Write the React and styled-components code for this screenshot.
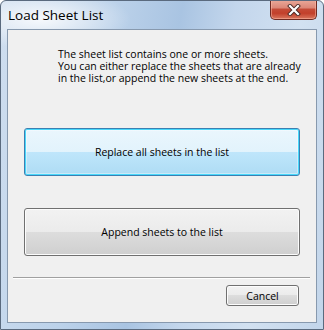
import React from "react";
import styled, { createGlobalStyle } from "styled-components";

const Global = createGlobalStyle`
  html, body { margin: 0; padding: 0; background: #ffffff; }
  body { width: 324px; height: 330px; overflow: hidden; }
  #root { width: 324px; height: 330px; }
`;

const Window = styled.div`
  box-sizing: border-box;
  width: 324px;
  height: 330px;
  display: flex;
  flex-direction: column;
  border: 1px solid #5a6a7e;
  border-radius: 6px 6px 0 0;
  background:
    radial-gradient(ellipse 90px 30px at 40px 18px, rgba(255,255,255,0.85), rgba(255,255,255,0) 100%),
    linear-gradient(100deg, #cfdeef 0%, #bcd2ea 30%, #a9c4e2 48%, #c3d6ec 62%, #d2e1f1 80%, #c2d5ea 100%);
  font-family: "Open Sans", "Noto Sans", sans-serif;
  color: #000;
  overflow: hidden;
`;

const TitleBar = styled.div`
  height: 28px;
  display: flex;
  align-items: flex-start;
  justify-content: space-between;
  flex-shrink: 0;
`;

const Title = styled.div`
  margin: 6px 0 0 7px;
  font-size: 13.5px;
  line-height: 16px;
  color: #000;
`;

const CloseButton = styled.div`
  box-sizing: border-box;
  width: 47px;
  height: 20px;
  margin: -1px 6px 0 0;
  border: 1px solid #6e2a22;
  border-top: none;
  border-radius: 0 0 5px 5px;
  background: linear-gradient(
    180deg,
    #eaa99a 0%,
    #dc8878 40%,
    #c44a36 50%,
    #c2402b 70%,
    #d9765e 100%
  );
  box-shadow: inset 0 0 0 1px rgba(255, 190, 170, 0.5);
  display: flex;
  align-items: center;
  justify-content: center;
`;

const Client = styled.div`
  box-sizing: border-box;
  flex: 1;
  margin: 0 6px 6px 6px;
  border: 1px solid #8799ae;
  background: #f0f0f0;
  display: flex;
  flex-direction: column;
`;

const Message = styled.div`
  margin: 18px 0 0 50px;
  font-size: 10.5px;
  line-height: 12px;
  color: #000;
`;

const BigButton = styled.div`
  box-sizing: border-box;
  width: 276px;
  height: 48px;
  margin: ${(p) => p.$top}px 0 0 16px;
  border: 1px solid ${(p) => (p.$primary ? "#3c7fb1" : "#707070")};
  border-radius: 3px;
  display: flex;
  align-items: center;
  justify-content: center;
  font-size: 10.5px;
  color: #000;
  background: ${(p) =>
    p.$primary
      ? "linear-gradient(180deg, #eaf6fd 0%, #e2f3fc 50%, #bfe6fb 50%, #aedcf4 100%)"
      : "linear-gradient(180deg, #f2f2f2 0%, #ebebeb 50%, #dddddd 50%, #cfcfcf 100%)"};
  box-shadow: ${(p) =>
    p.$primary
      ? "inset 0 0 0 1px #48d8fb, inset 0 0 0 2px rgba(255,255,255,0.35)"
      : "inset 0 0 0 1px #fcfcfc"};
`;

const Separator = styled.div`
  height: 0;
  margin: 21px 6px 0 5px;
  border-top: 1px solid #a0a0a0;
  border-bottom: 1px solid #ffffff;
`;

const Footer = styled.div`
  display: flex;
  justify-content: flex-end;
  margin: 6px 17px 0 0;
`;

const SmallButton = styled.div`
  box-sizing: border-box;
  width: 73px;
  height: 21px;
  border: 1px solid #707070;
  border-radius: 3px;
  display: flex;
  align-items: center;
  justify-content: center;
  font-size: 10.5px;
  color: #000;
  background: linear-gradient(180deg, #f2f2f2 0%, #ebebeb 50%, #dddddd 50%, #cfcfcf 100%);
  box-shadow: inset 0 0 0 1px #fcfcfc;
`;

export default function App() {
  return (
    <>
      <Global />
      <Window>
        <TitleBar>
          <Title>Load Sheet List</Title>
          <CloseButton>
            <svg width="14" height="12" viewBox="0 0 14 12">
              <path
                d="M3 2 L11 10 M11 2 L3 10"
                stroke="#4a2a26"
                strokeWidth="4"
                strokeLinecap="square"
              />
              <path
                d="M3 2 L11 10 M11 2 L3 10"
                stroke="#ffffff"
                strokeWidth="2.2"
                strokeLinecap="square"
              />
            </svg>
          </CloseButton>
        </TitleBar>
        <Client>
          <Message>
            The sheet list contains one or more sheets.
            <br />
            You can either replace the sheets that are already
            <br />
            in the list,or append the new sheets at the end.
          </Message>
          <BigButton $primary $top={44}>
            Replace all sheets in the list
          </BigButton>
          <BigButton $top={32}>Append sheets to the list</BigButton>
          <Separator />
          <Footer>
            <SmallButton>Cancel</SmallButton>
          </Footer>
        </Client>
      </Window>
    </>
  );
}
